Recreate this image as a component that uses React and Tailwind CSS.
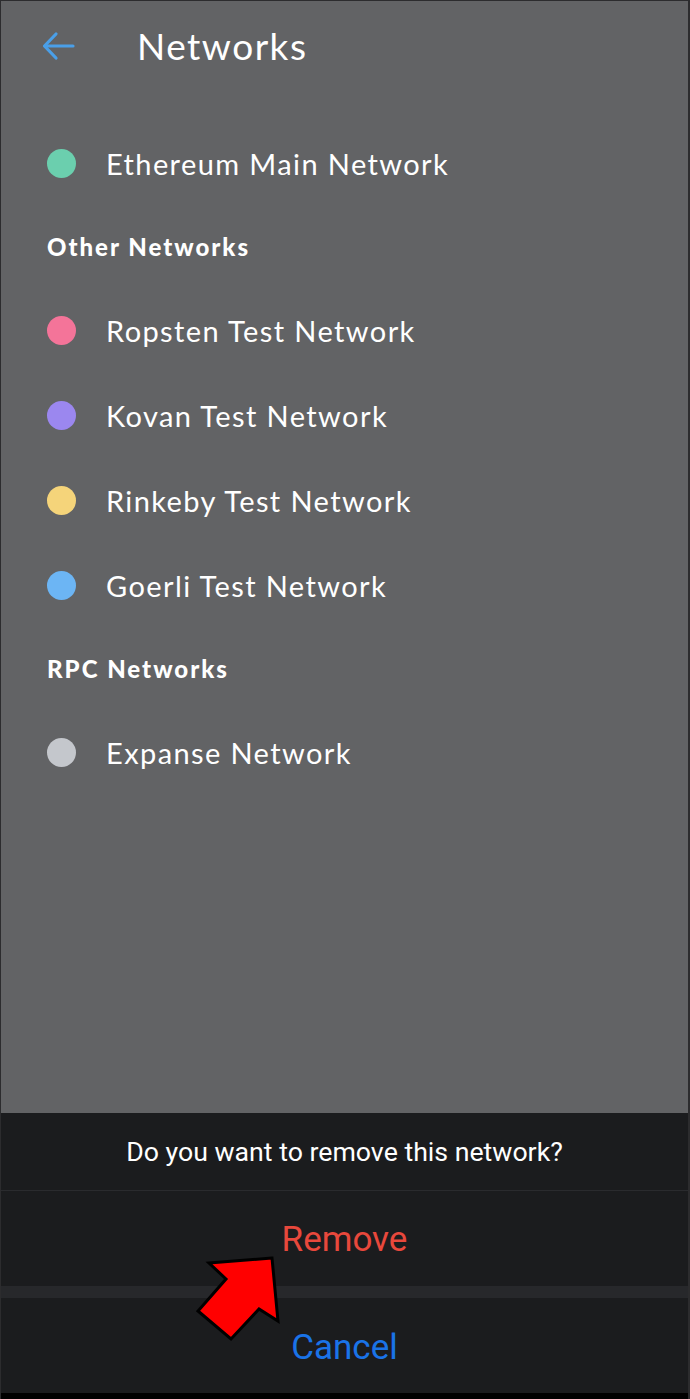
import React from "react";

const mainNet = { name: "Ethereum Main Network", color: "bg-[#6bcfae]" };

const otherNets = [
  { name: "Ropsten Test Network", color: "bg-[#f47499]" },
  { name: "Kovan Test Network", color: "bg-[#9b87ef]" },
  { name: "Rinkeby Test Network", color: "bg-[#f5d47a]" },
  { name: "Goerli Test Network", color: "bg-[#6cb5f4]" },
];

const rpcNets = [{ name: "Expanse Network", color: "bg-[#c4c7cc]" }];

const NetworkRow = ({ net }) => (
  <div className="h-[85px] flex items-center pl-[46px]">
    <span className={`w-[29px] h-[29px] rounded-full ${net.color}`} />
    <span className="ml-[30px] text-[29px] tracking-[1.4px] text-white leading-none">{net.name}</span>
  </div>
);

const SectionTitle = ({ children }) => (
  <div className="h-[82px] flex items-center pl-[46px] text-[24px] font-black tracking-[2px] text-white leading-none">
    {children}
  </div>
);

export default function App() {
  return (
    <div className="w-[690px] h-[1399px] flex flex-col bg-black border-t border-l border-r-2 border-[#2c2c2e] overflow-hidden">
      <div className="flex-1 bg-[#626365] font-['Lato',sans-serif]">
        <div className="h-[89px] flex items-center">
          <svg
            className="ml-[40px]"
            width="36"
            height="32"
            viewBox="0 0 36 32"
            fill="none"
            stroke="#4a9fe8"
            strokeWidth="3.2"
            strokeLinecap="round"
            strokeLinejoin="round"
          >
            <path d="M32 16H4" />
            <path d="M15 4L3.5 16L15 28" />
          </svg>
          <h1 className="ml-[60px] text-[37px] tracking-[1.5px] text-white leading-none">Networks</h1>
        </div>
        <div className="pt-[31px]">
          <NetworkRow net={mainNet} />
          <SectionTitle>Other Networks</SectionTitle>
          {otherNets.map((n) => (
            <NetworkRow key={n.name} net={n} />
          ))}
          <SectionTitle>RPC Networks</SectionTitle>
          {rpcNets.map((n) => (
            <NetworkRow key={n.name} net={n} />
          ))}
        </div>
      </div>

      <div className="relative h-[280px] bg-[#1b1c1e] font-['Roboto',sans-serif] flex flex-col">
        <div className="h-[77px] flex items-center justify-center pt-[2px] text-[26.7px] text-white">
          Do you want to remove this network?
        </div>
        <div className="h-px bg-[#2a2b2e]" />
        <div className="h-[95px] flex items-center justify-center pt-[3px] text-[35px] text-[#e8483c]">
          Remove
        </div>
        <div className="h-[12px] bg-[#27282b]" />
        <div className="h-[95px] flex items-center justify-center pt-[5px] text-[35px] text-[#1a73e8]">
          Cancel
        </div>

        <svg className="absolute left-[190px] top-[136px]" width="100" height="100" viewBox="190 1248 100 100">
          <polygon
            points="271,1257 208,1262 225,1278 197,1310 230,1338 258,1308 277,1320"
            fill="#ff0000"
            stroke="#000"
            strokeWidth="3"
            strokeLinejoin="miter"
          />
        </svg>
      </div>
      <div className="h-[6px] bg-black" />
    </div>
  );
}
